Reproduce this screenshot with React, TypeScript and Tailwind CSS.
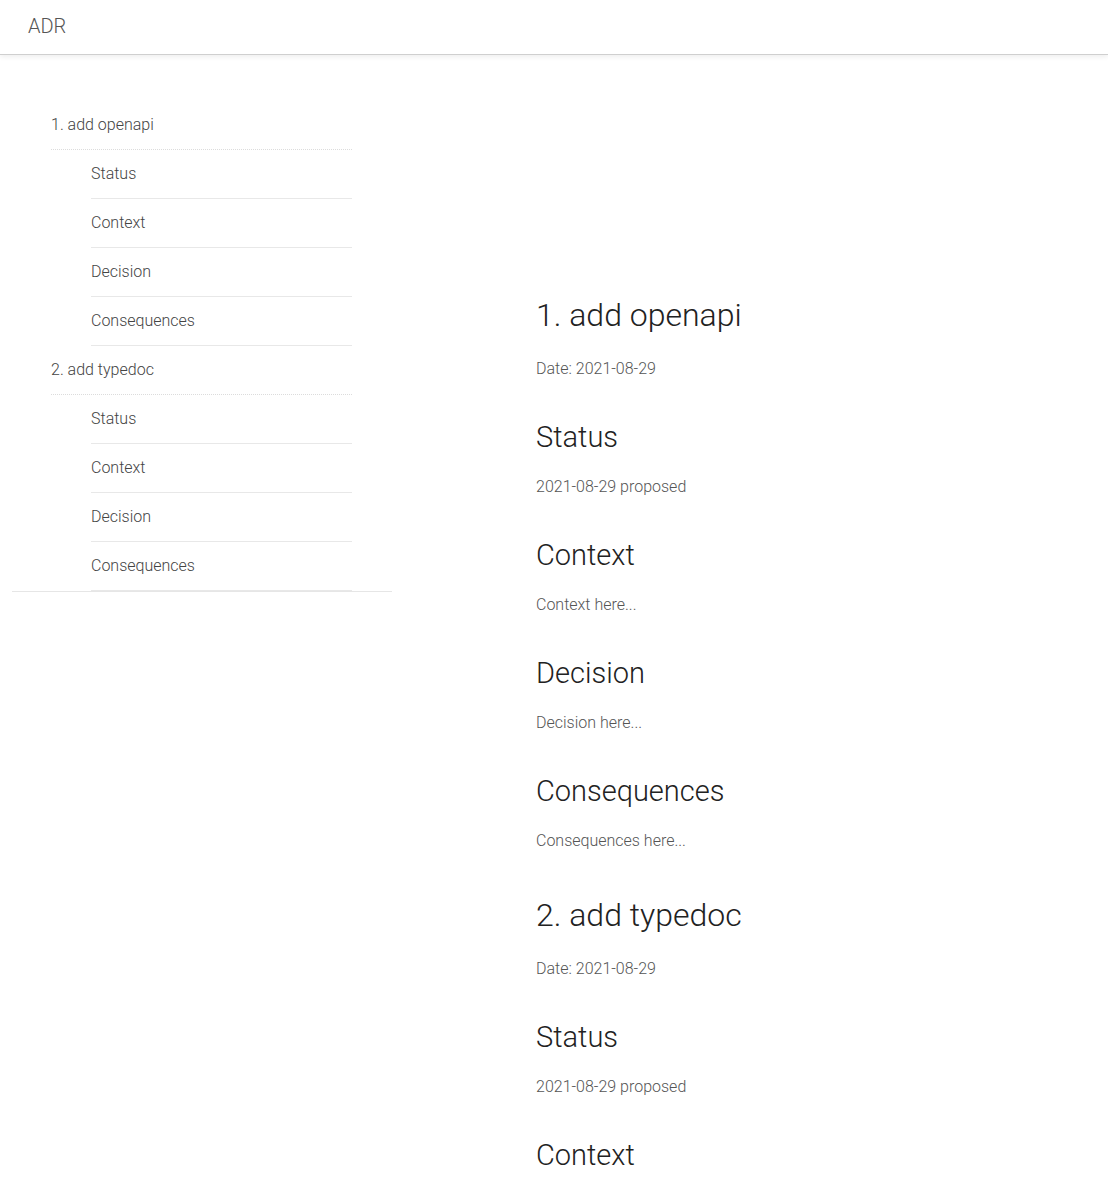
const records = [
  {
    title: '1. add openapi',
    date: '2021-08-29',
    status: '2021-08-29 proposed',
    context: 'Context here...',
    decision: 'Decision here...',
    consequences: 'Consequences here...',
  },
  {
    title: '2. add typedoc',
    date: '2021-08-29',
    status: '2021-08-29 proposed',
    context: 'Context here...',
    decision: 'Decision here...',
    consequences: 'Consequences here...',
  },
];

const sections = ['Status', 'Context', 'Decision', 'Consequences'];

function Sidebar() {
  return (
    <nav className="ml-[12px] mt-[46px] w-[380px] shrink-0 self-start border-b border-[#e6e6e6]">
      <ul className="pl-[39px] pr-[40px]">
        {records.map((r) => (
          <li key={r.title}>
            <a className="flex h-[49px] items-center border-b border-dotted border-[#dcdcdc] text-[16px] text-[#444]">
              {r.title}
            </a>
            <ul className="pl-[40px]">
              {sections.map((s) => (
                <li key={s}>
                  <a className="flex h-[49px] items-center border-b border-[#e8e8e8] text-[16px] text-[#444]">
                    {s}
                  </a>
                </li>
              ))}
            </ul>
          </li>
        ))}
      </ul>
    </nav>
  );
}

function Record({ r, first }: { r: (typeof records)[number]; first: boolean }) {
  const body = [r.status, r.context, r.decision, r.consequences];
  return (
    <section className={first ? '' : 'mt-[42px]'}>
      <h1 className="text-[32px] leading-[40px] text-[#222]">{r.title}</h1>
      <p className="mt-[22px] text-[16px] leading-[24px] text-[#555]">Date: {r.date}</p>
      {sections.map((s, i) => (
        <div key={s}>
          <h2 className="mt-[38px] text-[29px] leading-[36px] text-[#222]">{s}</h2>
          <p className="mt-[20px] text-[16px] leading-[24px] text-[#555]">{body[i]}</p>
        </div>
      ))}
    </section>
  );
}

export default function App() {
  return (
    <div className="h-screen overflow-hidden bg-white font-['Roboto',sans-serif] font-light">
      <header className="flex h-[55px] items-center border-b border-[#cfcfcf] px-[28px] pb-[3px] shadow-[0_2px_5px_rgba(0,0,0,0.07)]">
        <span className="text-[20px] text-[#555]">ADR</span>
      </header>
      <div className="flex">
        <Sidebar />
        <main className="ml-[144px] pt-[240px] pb-20">
          {records.map((r, i) => (
            <Record key={r.title} r={r} first={i === 0} />
          ))}
        </main>
      </div>
    </div>
  );
}
